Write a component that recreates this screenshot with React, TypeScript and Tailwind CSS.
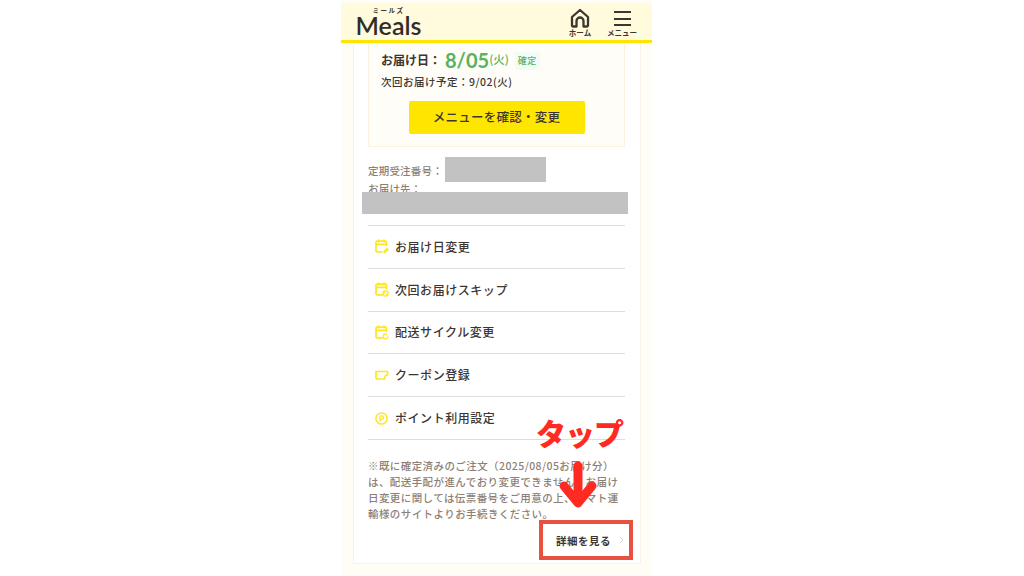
import React from "react";

const JP = "font-['Noto_Sans_CJK_JP','Noto_Sans',sans-serif]";

const CalendarBase: React.FC<{ children?: React.ReactNode }> = ({ children }) => (
	<svg width="14" height="15" viewBox="0 0 14 15" fill="none" stroke="#ffe61f" strokeWidth="1.700">
		<path d="M7.500 12.800H2a1 1 0 0 1-1-1V3.200a1 1 0 0 1 1-1h8.500a1 1 0 0 1 1 1V7" />
		<path d="M1 5.300h10.500M3.500 .5v3M9 .5v3" />
		{children}
	</svg>
);

const icons: Record<string, React.ReactNode> = {
	edit: (
		<CalendarBase>
			<path d="M9 13.500l4-4" strokeWidth="2.600" />
		</CalendarBase>
	),
	skip: (
		<CalendarBase>
			<circle cx="10.500" cy="11.500" r="2.600" strokeWidth="1.300" />
			<path d="M8.800 9.800l3.400 3.400" strokeWidth="1" />
		</CalendarBase>
	),
	cycle: (
		<CalendarBase>
			<path d="M13 11.500a2.500 2.500 0 1 1-.9-2" strokeWidth="1.300" />
		</CalendarBase>
	),
	coupon: (
		<svg width="14" height="15" viewBox="0 0 14 15" fill="none" stroke="#ffe61f" strokeWidth="1.700">
			<path d="M1 3.500h11.500v3.500c-1.800 0-2.800 1-3.100 4H2a1 1 0 0 1-1-1z" />
		</svg>
	),
	point: (
		<svg width="14" height="15" viewBox="0 0 14 15" fill="none" stroke="#ffe61f">
			<circle cx="6.500" cy="7.500" r="5.600" strokeWidth="1.500" />
			<path d="M5 10.800V4.800h1.800a1.700 1.700 0 0 1 0 3.500H5" strokeWidth="1.300" />
		</svg>
	),
};

const menuItems = [
	{ label: "お届け日変更", icon: "edit" },
	{ label: "次回お届けスキップ", icon: "skip" },
	{ label: "配送サイクル変更", icon: "cycle" },
	{ label: "クーポン登録", icon: "coupon" },
	{ label: "ポイント利用設定", icon: "point" },
];

const App: React.FC = () => {
	return (
		<div className={`relative h-[576px] w-[1024px] overflow-hidden bg-white ${JP}`}>
			<div className="ml-[341px] flex h-[576px] w-[311px] flex-col bg-[#fffdf5] pt-[3px]">
				{/* header */}
				<header className="flex h-[40px] shrink-0 items-start justify-between border-b-[3px] border-[#ffe600] bg-[#fffbdc] pl-[15px] pr-[15px]">
					<div className="flex w-[65px] flex-col items-center">
						<span className="mt-[3px] text-[6.500px] leading-[8px] font-bold tracking-[1.500px] text-[#3d3530]">ミールズ</span>
						<span className="mt-[1px] font-['Lato',sans-serif] text-[25px] leading-[20px] font-semibold text-[#332c28]">
							Meals
						</span>
					</div>
					<div className="flex gap-[15px]">
						<div className="flex w-[24px] flex-col items-center pt-[5px]">
							<svg width="20" height="20" viewBox="0 0 20 20" fill="none" stroke="#3d3530" strokeWidth="2.300" strokeLinejoin="round">
								<path d="M2 9 10 2l8 7v8.500a1 1 0 0 1-1 1h-3.500V13a3.500 3.500 0 0 0-7 0v5.500H3a1 1 0 0 1-1-1z" />
							</svg>
							<span className="whitespace-nowrap text-[7.500px] leading-[9px] font-bold text-[#3d3530]">ホーム</span>
						</div>
						<div className="flex w-[30px] flex-col items-center pt-[7px]">
							<div className="flex h-[17px] w-[17px] flex-col justify-between py-[1px]">
								<div className="h-[2px] bg-[#3d3530]" />
								<div className="h-[2px] bg-[#3d3530]" />
								<div className="h-[2px] bg-[#3d3530]" />
							</div>
							<span className="mt-[1px] whitespace-nowrap text-[7.500px] leading-[9px] font-bold text-[#3d3530]">メニュー</span>
						</div>
					</div>
				</header>

				{/* card */}
				<main className="ml-[12px] h-[521px] w-[288px] shrink-0 border-x border-b border-[#f6f3e8] bg-white pl-[14px] pr-[14px]">
					<section className="h-[104px] w-[257px] border-x border-b border-[#fbf1df] bg-[#fffdf8] px-[12px]">
						<div className="flex h-[30px] items-center pt-[3px] text-[#3d3530]">
							<span className="w-[64px] shrink-0 text-[12px] font-bold whitespace-nowrap">お届け日：</span>
							<span className="font-['Lato',sans-serif] text-[20px] leading-[24px] font-bold text-[#57b35d]">8/05</span>
							<span className="text-[11.500px] font-medium text-[#57b35d]">(火)</span>
							<span className="mt-[3px] ml-[6px] bg-[#f3fbf6] px-[3px] text-[9px] leading-[18px] font-medium tracking-[0.500px] text-[#57b35d]">確定</span>
						</div>
						<p className="mt-[1px] text-[10.500px] leading-[16px] font-medium tracking-[0.500px] text-[#3d3530]">次回お届け予定：9/02(火)</p>
						<div className="mt-[11px] flex justify-center">
							<button className="h-[33px] w-[176px] rounded-[2px] bg-[#ffe600] text-[12.500px] font-medium tracking-[0.250px] text-[#3d3530]">
								メニューを確認・変更
							</button>
						</div>
					</section>

					<div className="mt-[14px] h-[64px] text-[10.500px] font-medium tracking-[0.200px] text-[#8d7f76]">
						<p className="h-[20px] leading-[20px]">定期受注番号：</p>
						<p className="leading-[16px]">お届け先：</p>
					</div>

					<ul className="w-[257px] border-b border-[#dedede]">
						{menuItems.map((item) => (
							<li key={item.label} className="flex h-[42.800px] items-center gap-[6px] border-t-[1.500px] border-[#dedede] pl-[7px]">
								{icons[item.icon]}
								<span className="text-[12px] font-medium tracking-[0.550px] text-[#3d3530]">{item.label}</span>
							</li>
						))}
					</ul>

					<p className="mt-[18px] text-[10.500px] leading-[16px] font-medium tracking-[0.420px] text-[#8d7f76]">
						※既に確定済みのご注文（2025/08/05お届け分）は、配送手配が進んでおり変更できません。お届け日変更に関しては伝票番号をご用意の上、ヤマト運輸様のサイトよりお手続きください。
					</p>

					<div className="mt-[3px] flex h-[31px] items-center justify-end gap-[8px] pr-[2px]">
						<span className="text-[10.500px] font-bold tracking-[0.500px] text-[#3d3530]">詳細を見る</span>
						<svg width="5" height="8" viewBox="0 0 5 8" fill="none" stroke="#d5d5d5" strokeWidth="1">
							<path d="M1 1l3 3-3 3" />
						</svg>
					</div>
				</main>
			</div>

			{/* redaction blocks */}
			<div className="absolute top-[157px] left-[445px] h-[25px] w-[101px] bg-[#c2c2c2]" />
			<div className="absolute top-[192px] left-[362px] h-[22px] w-[266px] bg-[#c2c2c2]" />

			{/* annotation */}
			<span className="absolute top-[410px] left-[536px] text-[30px] leading-[44px] font-black tracking-[-1px] text-[#ff2a22]">タップ</span>
			<svg className="absolute top-[460px] left-[549px]" width="58" height="52" viewBox="0 0 58 52" fill="none" stroke="#ff2a22" strokeWidth="9" strokeLinecap="round" strokeLinejoin="round">
				<path d="M29 6v36" />
				<path d="M15 26l14 17 14-17" />
			</svg>
			<div className="absolute top-[520px] left-[539px] h-[40px] w-[94px] border-[4px] border-[#e8503f]" />
		</div>
	);
};

export default App;
